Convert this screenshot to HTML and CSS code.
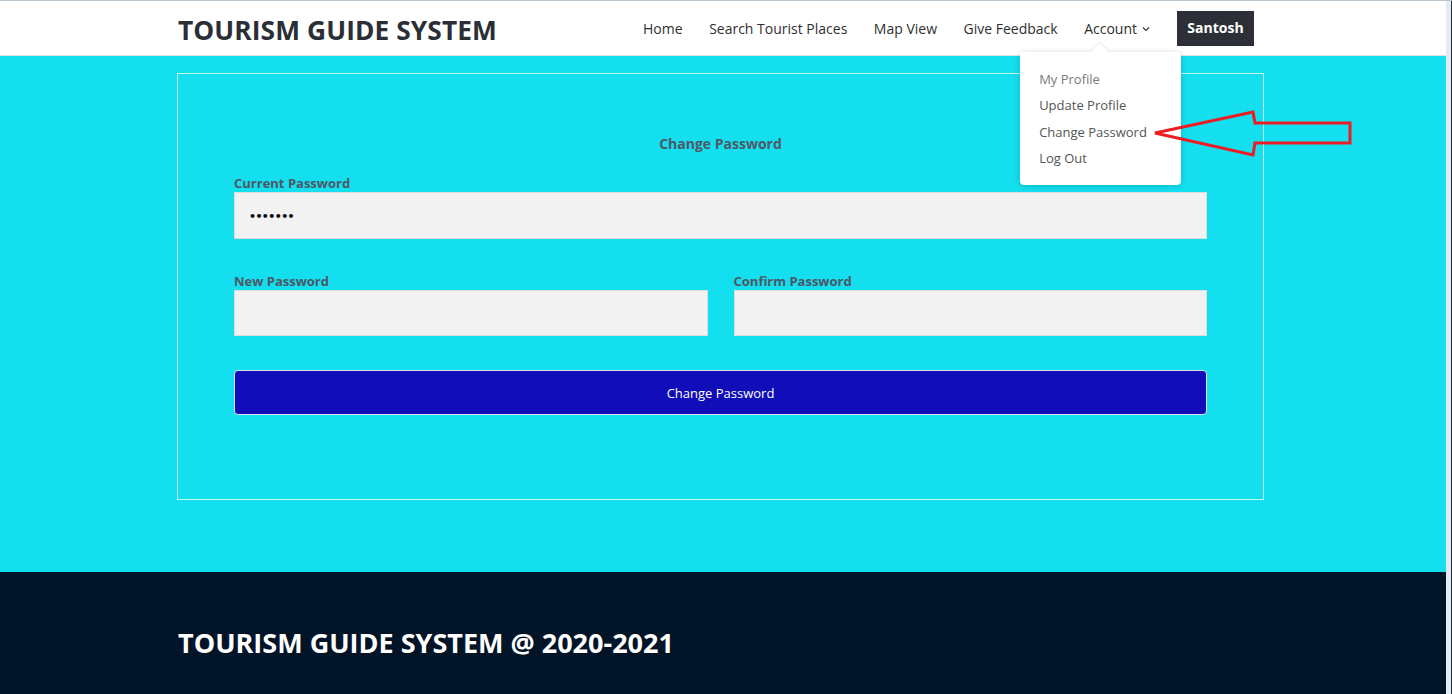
FILE: index.html
```html
<!DOCTYPE html>
<html lang="en">
<head>
<meta charset="utf-8">
<title>Tourism Guide System - Change Password</title>
<link rel="stylesheet" href="styles.css">
</head>
<body>
<div class="page">
  <div class="site">
    <header class="header">
      <div class="wrap header-row">
        <div class="logo">TOURISM GUIDE SYSTEM</div>
        <nav class="nav">
          <a class="nav-link">Home</a>
          <a class="nav-link">Search Tourist Places</a>
          <a class="nav-link">Map View</a>
          <a class="nav-link">Give Feedback</a>
          <div class="account">
            <a class="acc-link">Account <svg class="chev" width="8" height="6" viewBox="0 0 8 6"><path d="M1 1.5 L4 4.5 L7 1.5" fill="none" stroke="#333" stroke-width="1.1"/></svg></a>
            <div class="dropdown">
              <span class="caret"></span>
              <a class="dd-item dd-muted">My Profile</a>
              <a class="dd-item">Update Profile</a>
              <a class="dd-item">Change Password</a>
              <a class="dd-item">Log Out</a>
            </div>
          </div>
          <a class="user-btn">Santosh</a>
        </nav>
      </div>
    </header>

    <main class="hero">
      <div class="wrap">
        <div class="form-box">
          <h2 class="form-title">Change Password</h2>
          <label class="lbl">Current Password</label>
          <div class="inp inp-tall"><span class="dots">&bull;&bull;&bull;&bull;&bull;&bull;&bull;</span></div>
          <div class="row">
            <div class="col">
              <label class="lbl">New Password</label>
              <div class="inp"></div>
            </div>
            <div class="col">
              <label class="lbl">Confirm Password</label>
              <div class="inp"></div>
            </div>
          </div>
          <button class="btn">Change Password</button>
        </div>
      </div>
      <svg class="arrow" width="210" height="50" viewBox="1150 108 210 50">
        <path d="M1155 133 L1253 112 L1255 123 L1350 123 L1350 143 L1255 143 L1253 155 Z" fill="none" stroke="#ed1c24" stroke-width="3" stroke-linejoin="miter"/>
      </svg>
    </main>

    <footer class="footer">
      <div class="wrap">
        <div class="foot-text">TOURISM GUIDE SYSTEM @ 2020-2021</div>
      </div>
    </footer>
  </div>
  <div class="edge"></div>
</div>
</body>
</html>
```

FILE: styles.css
```css
* { box-sizing: border-box; }
html, body { margin: 0; padding: 0; }
body {
  font-family: "Open Sans", "Noto Sans", sans-serif;
  color: #333;
  overflow: hidden;
}
.page {
  display: flex;
  height: 694px;
  border-top: 1px solid #b9c6cf;
}
.site {
  flex: 1;
  display: flex;
  flex-direction: column;
  position: relative;
}
.edge {
  width: 6px;
  background: #e4ebf4;
  border-right: 1px solid #1f2a33;
}
.wrap {
  width: 1087px;
  margin-left: 177px;
}
.header {
  height: 55px;
  background: #fff;
  border-bottom: 1px solid #e2e2e2;
}
.header-row {
  display: flex;
  align-items: center;
  justify-content: space-between;
  height: 54px;
  padding-left: 1px;
  padding-right: 10px;
}
.logo {
  font-weight: 700;
  font-size: 26.3px;
  color: #2b2e37;
  letter-spacing: 0.1px;
  margin-top: 4px;
}
.nav {
  display: flex;
  align-items: center;
}
.nav-link, .acc-link {
  font-size: 14px;
  line-height: 19px;
  color: #2f2f2f;
  display: flex;
  align-items: center;
  gap: 5px;
  cursor: pointer;
  margin-right: 26.5px;
}
.acc-link { margin-right: 0; }
.chev { margin-top: 1px; }
.account { position: relative; }
.user-btn {
  margin-left: 27px;
  background: #2c2f38;
  color: #fff;
  font-weight: 700;
  font-size: 14px;
  padding: 6px 10px 8px;
  width: 77px;
  justify-content: center;
  height: 35px;
  display: flex;
  align-items: center;
}
.dropdown {
  position: absolute;
  top: calc(100% + 14px);
  left: -64px;
  width: 161px;
  background: #fff;
  border-radius: 4px;
  box-shadow: 0 1px 6px rgba(0,0,0,0.18);
  padding: 14px 0 13px 19px;
  display: flex;
  flex-direction: column;
  z-index: 5;
}
.caret {
  position: absolute;
  top: -7px;
  left: 74px;
  width: 11px;
  height: 11px;
  background: #fff;
  transform: rotate(45deg);
  box-shadow: -1px -1px 2px rgba(0,0,0,0.08);
}
.dd-item {
  font-size: 13px;
  color: #555;
  line-height: 26.5px;
  position: relative;
}
.dd-muted { color: #7a7a7a; }
.hero {
  background: #13dfee;
  height: 516px;
  padding-top: 17px;
  position: relative;
}
.form-box {
  border: 1px solid rgba(255,255,255,0.75);
  height: 427px;
  padding: 60px 56px 0 56px;
}
.form-title {
  margin: 0 0 21px;
  text-align: center;
  font-size: 14px;
  line-height: 20px;
  font-weight: 700;
  color: #505866;
}
.lbl {
  display: block;
  font-size: 13px;
  font-weight: 700;
  line-height: 16px;
  color: #4f5666;
  margin-bottom: 1px;
}
.inp {
  height: 46px;
  background: #f2f2f2;
  border: 1px solid #dcdcdc;
}
.inp-tall {
  height: 47px;
  display: flex;
  align-items: center;
  padding-left: 14px;
}
.dots {
  font-size: 11px;
  letter-spacing: -0.6px;
  color: #000;
  font-family: "DejaVu Sans", sans-serif;
  font-weight: 700;
  margin-top: 2px;
}
.row {
  display: flex;
  gap: 26px;
  margin-top: 34px;
}
.col { flex: 1; }
.btn {
  display: block;
  width: 100%;
  margin-top: 34px;
  height: 45px;
  background: #100db9;
  border: 1px solid #d8e4f0;
  border-radius: 4px;
  color: #fff;
  font-family: "Open Sans", "Noto Sans", sans-serif;
  font-size: 13px;
}
.arrow {
  position: absolute;
  left: 1150px;
  top: 52px;
  z-index: 6;
}
.footer {
  flex: 1;
  background: #021427;
}
.foot-text {
  padding-top: 52px;
  padding-left: 1px;
  color: #fff;
  font-weight: 700;
  font-size: 27px;
}
```
